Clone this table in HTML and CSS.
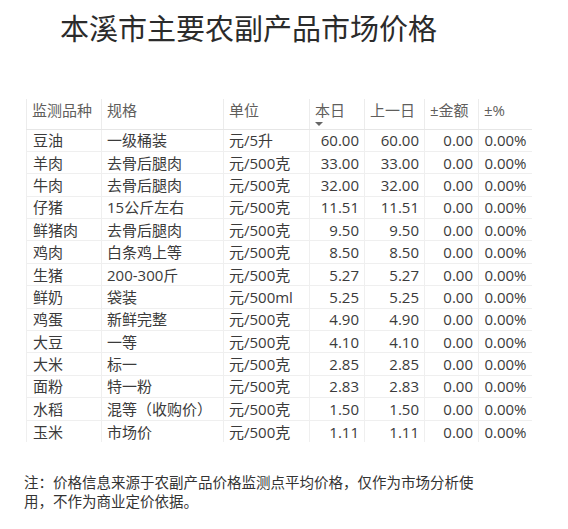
FILE: index.html
```html
<!DOCTYPE html>
<html lang="zh-CN">
<head>
<meta charset="utf-8">
<link rel="stylesheet" href="styles.css">
</head>
<body>
<div class="page">
  <h1 class="title">本溪市主要农副产品市场价格</h1>
  <table class="prices">
    <colgroup>
      <col class="c1"><col class="c2"><col class="c3"><col class="c4"><col class="c5"><col class="c6"><col class="c7">
    </colgroup>
    <thead>
      <tr>
        <th>监测品种</th><th>规格</th><th>单位</th><th class="sorted">本日<span class="arrow"></span></th><th>上一日</th><th>±金额</th><th>±%</th>
      </tr>
    </thead>
    <tbody>
      <tr><td>豆油</td><td>一级桶装</td><td>元/5升</td><td class="num">60.00</td><td class="num">60.00</td><td class="num">0.00</td><td class="num">0.00%</td></tr>
      <tr><td>羊肉</td><td>去骨后腿肉</td><td>元/500克</td><td class="num">33.00</td><td class="num">33.00</td><td class="num">0.00</td><td class="num">0.00%</td></tr>
      <tr><td>牛肉</td><td>去骨后腿肉</td><td>元/500克</td><td class="num">32.00</td><td class="num">32.00</td><td class="num">0.00</td><td class="num">0.00%</td></tr>
      <tr><td>仔猪</td><td>15公斤左右</td><td>元/500克</td><td class="num">11.51</td><td class="num">11.51</td><td class="num">0.00</td><td class="num">0.00%</td></tr>
      <tr><td>鲜猪肉</td><td>去骨后腿肉</td><td>元/500克</td><td class="num">9.50</td><td class="num">9.50</td><td class="num">0.00</td><td class="num">0.00%</td></tr>
      <tr><td>鸡肉</td><td>白条鸡上等</td><td>元/500克</td><td class="num">8.50</td><td class="num">8.50</td><td class="num">0.00</td><td class="num">0.00%</td></tr>
      <tr><td>生猪</td><td>200-300斤</td><td>元/500克</td><td class="num">5.27</td><td class="num">5.27</td><td class="num">0.00</td><td class="num">0.00%</td></tr>
      <tr><td>鲜奶</td><td>袋装</td><td>元/500ml</td><td class="num">5.25</td><td class="num">5.25</td><td class="num">0.00</td><td class="num">0.00%</td></tr>
      <tr><td>鸡蛋</td><td>新鲜完整</td><td>元/500克</td><td class="num">4.90</td><td class="num">4.90</td><td class="num">0.00</td><td class="num">0.00%</td></tr>
      <tr><td>大豆</td><td>一等</td><td>元/500克</td><td class="num">4.10</td><td class="num">4.10</td><td class="num">0.00</td><td class="num">0.00%</td></tr>
      <tr><td>大米</td><td>标一</td><td>元/500克</td><td class="num">2.85</td><td class="num">2.85</td><td class="num">0.00</td><td class="num">0.00%</td></tr>
      <tr><td>面粉</td><td>特一粉</td><td>元/500克</td><td class="num">2.83</td><td class="num">2.83</td><td class="num">0.00</td><td class="num">0.00%</td></tr>
      <tr><td>水稻</td><td>混等（收购价）</td><td>元/500克</td><td class="num">1.50</td><td class="num">1.50</td><td class="num">0.00</td><td class="num">0.00%</td></tr>
      <tr><td>玉米</td><td>市场价</td><td>元/500克</td><td class="num">1.11</td><td class="num">1.11</td><td class="num">0.00</td><td class="num">0.00%</td></tr>
    </tbody>
  </table>
  <p class="note">注：价格信息来源于农副产品价格监测点平均价格，仅作为市场分析使用，不作为商业定价依据。</p>
</div>
</body>
</html>
```

FILE: styles.css
```css
html, body {
  margin: 0;
  padding: 0;
  background: #ffffff;
}

body {
  font-family: "Open Sans", "Noto Sans CJK SC", sans-serif;
  color: #404040;
}

.page {
  width: 568px;
  height: 529px;
  overflow: hidden;
}

.title {
  margin: 0;
  padding: 7px 0 0 60px;
  font-family: "Noto Sans CJK SC", sans-serif;
  font-weight: 400;
  font-size: 29px;
  line-height: 40px;
  color: #2b2b2b;
}

.prices {
  margin: 52px 0 0 26px;
  width: 505px;
  table-layout: fixed;
  border-collapse: collapse;
  font-size: 15px;
}

.c1 { width: 75px; }
.c2 { width: 122px; }
.c3 { width: 86px; }
.c4 { width: 55px; }
.c5 { width: 60px; }
.c6 { width: 54px; }
.c7 { width: 53px; }

.prices th {
  height: 30px;
  padding: 0 4px 0 5px;
  text-align: left;
  vertical-align: top;
  font-weight: 400;
  line-height: 22px;
  color: #605e5c;
  white-space: nowrap;
  border-left: 1px solid #ececec;
  border-bottom: 1px solid #e6e6e6;
  box-sizing: border-box;
}

.prices th:first-child {
  padding-left: 5px;
}

.sorted {
  position: relative;
}

.arrow {
  position: absolute;
  left: 5px;
  top: 23px;
  width: 0;
  height: 0;
  border-left: 4px solid transparent;
  border-right: 4px solid transparent;
  border-top: 4px solid #666666;
}

.prices td {
  height: 22.4px;
  padding: 0 5px;
  line-height: 20px;
  white-space: nowrap;
  overflow: hidden;
  border-left: 1px solid #efefef;
  border-bottom: 1px solid #efefef;
  box-sizing: border-box;
  color: #3b3b3b;
}

.prices td:first-child {
  padding-left: 6px;
}

.prices td.num {
  text-align: right;
  padding-right: 5px;
}

.prices tbody tr:last-child td {
  border-bottom: none;
}

.note {
  margin: 30px 0 0 24px;
  width: 456px;
  font-family: "Noto Sans CJK SC", sans-serif;
  font-size: 14.5px;
  line-height: 19px;
  color: #333333;
}
```
